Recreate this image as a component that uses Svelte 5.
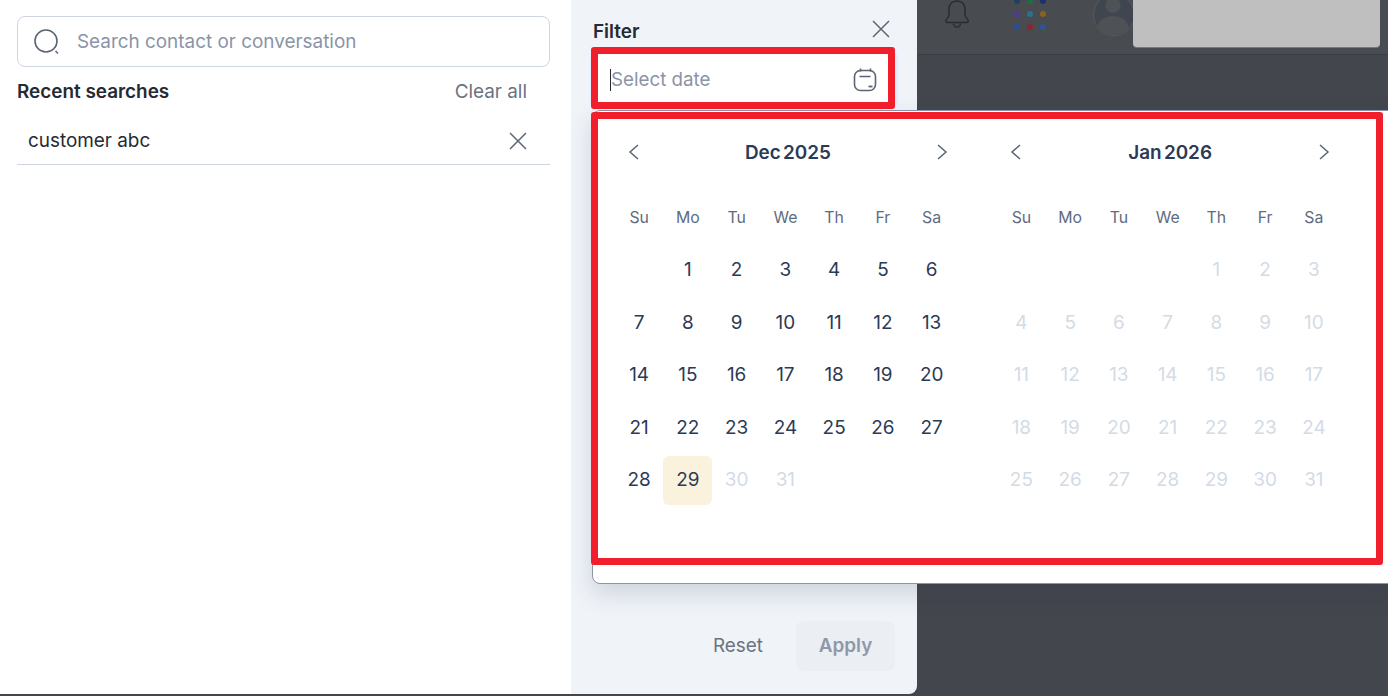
<script>
    const weekdays = ["Su", "Mo", "Tu", "We", "Th", "Fr", "Sa"];

    function range(from, to) {
        const out = [];
        for (let d = from; d <= to; d++) out.push(d);
        return out;
    }

    const months = [
        { title: "Dec 2025", blanks: 1, days: range(1, 31), activeTo: 29 },
        { title: "Jan 2026", blanks: 4, days: range(1, 31), activeTo: 0 },
    ];

    const dots = [
        "#24405f", "#1b7048", "#1c3270",
        "#4f3a8e", "#2c6f8e", "#8a621f",
        "#2a4f98", "#8f2430", "#2f5590",
    ];
</script>

<div class="page">
    <section class="search-panel">
        <div class="search-box">
            <svg class="search-icon" viewBox="0 0 28 28" width="28" height="28" fill="none">
                <circle cx="12" cy="13" r="11" stroke="#5b6473" stroke-width="1.6" />
                <path d="M21.500 23l2.500 2.500" stroke="#5b6473" stroke-width="1.400" />
            </svg>
            <span>Search contact or conversation</span>
        </div>
        <div class="recent-head">
            <strong>Recent searches</strong>
            <span>Clear all</span>
        </div>
        <div class="recent-row">
            <span>customer abc</span>
            <svg viewBox="0 0 18 18" width="18" height="18" fill="none">
                <path d="M1 1l16 16M17 1L1 17" stroke="#5b6473" stroke-width="1.500" />
            </svg>
        </div>
    </section>

    <section class="filter-panel">
        <div class="filter-head">
            <strong>Filter</strong>
            <svg viewBox="0 0 18 18" width="18" height="18" fill="none">
                <path d="M1 1l16 16M17 1L1 17" stroke="#5b6473" stroke-width="1.500" />
            </svg>
        </div>
        <div class="date-input">
            <i class="caret"></i>
            <span>Select date</span>
            <svg viewBox="0 0 24 24" width="24" height="24" fill="none" stroke="#5b6473" stroke-width="1.600">
                <rect x="1.500" y="2.500" width="21" height="20" rx="6" />
                <path d="M7.500 .5v3M17.500 .5v3M6.500 8.500h11" />
                <path d="M15.500 18.500h4" stroke-width="1.800" />
            </svg>
        </div>
        <div class="filter-actions">
            <span class="reset">Reset</span>
            <span class="apply">Apply</span>
        </div>
    </section>

    <section class="backdrop">
        <div class="topbar">
            <svg class="bell" viewBox="0 0 26 32" width="26" height="32" fill="none" stroke="#2a2c30" stroke-width="1.500">
                <path d="M13 2c-5 0-8 3.500-8 8.500v5c0 2.500-1.500 4-3 5.500-.8 1 0 2.500 1.500 2.500h19c1.500 0 2.300-1.500 1.500-2.500-1.500-1.500-3-3-3-5.500v-5C21 5.500 18 2 13 2z" />
                <path d="M9.500 24.500c.3 2 1.700 3.500 3.500 3.500s3.200-1.500 3.500-3.500" />
            </svg>
            <div class="dots">
                {#each dots as color}
                    <i style="background: {color}"></i>
                {/each}
            </div>
            <div class="avatar">
                <svg viewBox="0 0 42 42" width="40" height="40">
                    <circle cx="20" cy="11" r="8" fill="#4e5156" />
                    <ellipse cx="20" cy="34" rx="16" ry="12" fill="#4e5156" />
                </svg>
            </div>
            <div class="profile"></div>
        </div>
    </section>

    <div class="popover">
        {#each months as month}
            <div class="month">
                <div class="month-head">
                    <svg viewBox="0 0 12 16" width="12" height="16" fill="none">
                        <path d="M10 1L2 8l8 7" stroke="#5b6473" stroke-width="1.500" />
                    </svg>
                    <strong>{month.title}</strong>
                    <svg viewBox="0 0 12 16" width="12" height="16" fill="none">
                        <path d="M2 1l8 7-8 7" stroke="#5b6473" stroke-width="1.500" />
                    </svg>
                </div>
                <div class="grid">
                    {#each weekdays as day}
                        <span class="weekday">{day}</span>
                    {/each}
                    {#each Array(month.blanks) as _}
                        <span></span>
                    {/each}
                    {#each month.days as day}
                        <span
                            class="day"
                            class:muted={day > month.activeTo}
                            class:today={day === 29 && month.activeTo === 29}
                        >{day}</span>
                    {/each}
                </div>
            </div>
        {/each}
    </div>

    <div class="mark mark-input"></div>
    <div class="mark mark-calendar"></div>
</div>

<style>
    :global(body) {
        margin: 0;
        background: #fff;
    }

    .page {
        position: relative;
        width: 1388px;
        height: 696px;
        display: flex;
        overflow: hidden;
        background: #43464d;
        font-family: Inter, "Noto Sans", sans-serif;
        font-size: 18.9px;
        color: #252a33;
    }

    .search-panel {
        width: 571px;
        height: 694px;
        box-sizing: border-box;
        padding: 16px 21px 0 17px;
        background: #fff;
        flex-shrink: 0;
    }

    .search-box {
        height: 51px;
        box-sizing: border-box;
        display: flex;
        align-items: center;
        gap: 15px;
        padding-left: 16px;
        border: 1px solid #cfd6e1;
        border-radius: 8px;
        color: #8a94a6;
    }

    .recent-head {
        display: flex;
        justify-content: space-between;
        padding: 12px 23px 0 0;
        line-height: 26px;
    }

    .recent-head strong {
        font-weight: 600;
        color: #252a33;
    }

    .recent-head span {
        color: #6b7280;
    }

    .recent-row {
        height: 47px;
        margin-top: 12px;
        display: flex;
        align-items: center;
        justify-content: space-between;
        padding: 0 23px 0 11px;
        border-bottom: 1px solid #cfd6e1;
    }

    .filter-panel {
        position: relative;
        width: 346px;
        height: 694px;
        box-sizing: border-box;
        padding: 0 22px 23px;
        flex-shrink: 0;
        display: flex;
        flex-direction: column;
        background: #f0f4f9;
        border-bottom-right-radius: 8px;
    }

    .filter-head {
        height: 43px;
        padding: 10px 5px 0 0;
        display: flex;
        align-items: center;
        justify-content: space-between;
    }

    .filter-head strong {
        font-weight: 600;
    }

    .filter-head svg {
        margin-top: -5px;
    }

    .date-input {
        height: 53px;
        display: flex;
        align-items: center;
        padding: 0 18px 0 17px;
        background: #fff;
        border-radius: 6px;
        box-shadow: 0 0 0 3px #e1ecff;
        font-size: 18.75px;
        color: #8a94a6;
    }

    .date-input span {
        flex: 1;
    }

    .caret {
        width: 1px;
        height: 22px;
        background: #252a33;
    }

    .filter-actions {
        margin-top: auto;
        display: flex;
        justify-content: flex-end;
        align-items: center;
        gap: 33px;
    }

    .reset {
        margin-bottom: 2px;
        color: #6b7280;
    }

    .apply {
        width: 99px;
        height: 50px;
        box-sizing: border-box;
        padding-bottom: 2px;
        display: flex;
        align-items: center;
        justify-content: center;
        background: #ebeff3;
        border-radius: 8px;
        font-weight: 600;
        color: #8f98a8;
    }

    .backdrop {
        flex: 1;
        min-width: 0;
    }

    .topbar {
        height: 54px;
        display: flex;
        align-items: flex-start;
        background: #484b50;
        border-bottom: 1px solid #3b3e43;
    }

    .bell {
        margin: -1px 0 0 27px;
    }

    .dots {
        margin: -2px 0 0 44px;
        display: grid;
        grid-template-columns: repeat(3, 6px);
        gap: 7px;
    }

    .dots i {
        width: 6px;
        height: 6px;
        border-radius: 50%;
    }

    .avatar {
        width: 40px;
        height: 40px;
        margin: -6px 0 0 47px;
        border-radius: 50%;
        border: 1px solid #565c58;
        overflow: hidden;
        background: #404650;
    }

    .profile {
        width: 247px;
        height: 47px;
        margin-left: -2px;
        background: #bfbfbf;
        border-radius: 0 0 4px 4px;
        box-shadow: 0 1px 0 #77787b;
    }

    .popover {
        position: absolute;
        left: 592px;
        top: 110px;
        width: 810px;
        height: 474px;
        box-sizing: border-box;
        display: flex;
        gap: 41px;
        padding: 23px 0 0 21.75px;
        background: #fff;
        border: 1px solid #8a94a6;
        border-radius: 8px;
        box-shadow: 0 10px 24px rgba(40, 50, 70, 0.16);
    }

    .month {
        width: 341.25px;
    }

    .month-head {
        height: 36px;
        display: flex;
        align-items: center;
        justify-content: space-between;
        padding: 0 8px 0 13px;
        color: #2b3a55;
    }

    .month-head strong {
        font-weight: 600;
        word-spacing: -2.5px;
    }

    .grid {
        margin-top: 22px;
        display: grid;
        grid-template-columns: repeat(7, 48.75px);
        grid-auto-rows: 52.5px;
        align-items: center;
        justify-items: center;
    }

    .weekday {
        font-size: 15.8px;
        color: #5e6b80;
        height: 49px;
        line-height: 47px;
    }

    .day {
        width: 49px;
        height: 49px;
        line-height: 47px;
        text-align: center;
        color: #2b3a55;
        border-radius: 6px;
    }

    .day.muted {
        color: #d3dbe5;
    }

    .day.today {
        background: #fbf2dd;
    }

    .mark {
        position: absolute;
        box-sizing: border-box;
        border: 7px solid #f01f2b;
        border-radius: 3px;
    }

    .mark-input {
        left: 591px;
        top: 47px;
        width: 304px;
        height: 62px;
    }

    .mark-calendar {
        left: 591px;
        top: 112px;
        width: 792px;
        height: 453px;
    }
</style>
